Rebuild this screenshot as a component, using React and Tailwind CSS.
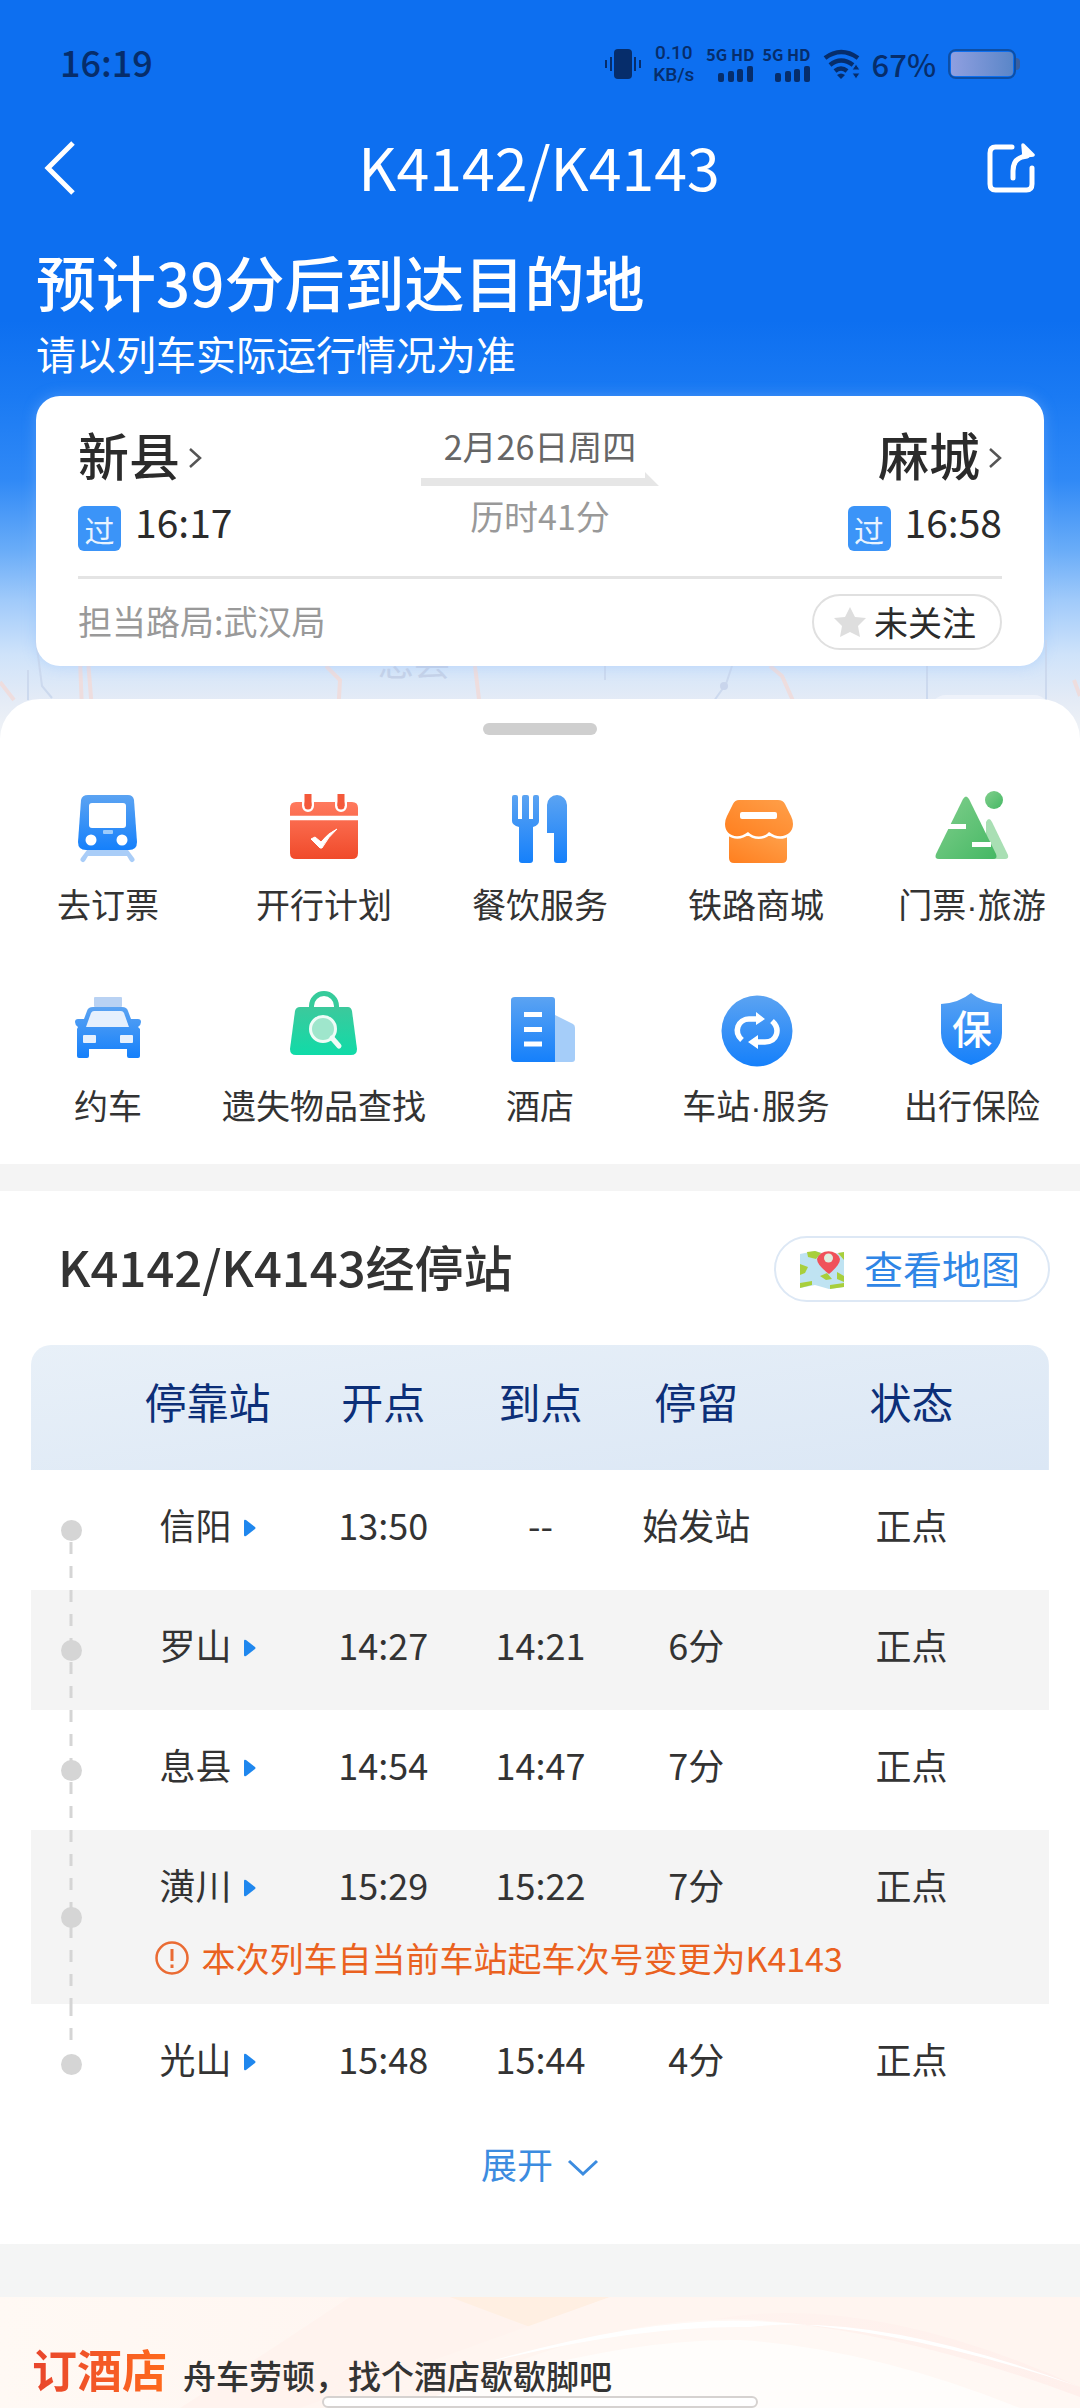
import React, { useState } from "react";

const shortcuts = [
  { label: "去订票", icon: TrainIcon },
  { label: "开行计划", icon: CalendarIcon },
  { label: "餐饮服务", icon: DiningIcon },
  { label: "铁路商城", icon: ShopIcon },
  { label: "门票·旅游", icon: MountainIcon },
  { label: "约车", icon: TaxiIcon },
  { label: "遗失物品查找", icon: BagIcon },
  { label: "酒店", icon: HotelIcon },
  { label: "车站·服务", icon: StationIcon },
  { label: "出行保险", icon: ShieldIcon },
];

const stops = [
  { name: "信阳", depart: "13:50", arrive: "--", stay: "始发站", status: "正点" },
  { name: "罗山", depart: "14:27", arrive: "14:21", stay: "6分", status: "正点" },
  { name: "息县", depart: "14:54", arrive: "14:47", stay: "7分", status: "正点" },
  {
    name: "潢川",
    depart: "15:29",
    arrive: "15:22",
    stay: "7分",
    status: "正点",
    notice: "本次列车自当前车站起车次号变更为K4143",
  },
  { name: "光山", depart: "15:48", arrive: "15:44", stay: "4分", status: "正点" },
];

/* shared gradients for the shortcut icons */
const Gradients = () => (
  <svg className="absolute h-0 w-0" aria-hidden="true">
    <defs>
      <linearGradient id="blue" x1="0" y1="0" x2="0" y2="1">
        <stop offset="0" stopColor="#5ba3f2" />
        <stop offset="1" stopColor="#1580fb" />
      </linearGradient>
      <linearGradient id="red" x1="0" y1="0" x2="0" y2="1">
        <stop offset="0" stopColor="#ff7a5e" />
        <stop offset="1" stopColor="#f04a2a" />
      </linearGradient>
      <linearGradient id="orange" x1="1" y1="0" x2="0" y2="1">
        <stop offset="0" stopColor="#ffa04a" />
        <stop offset="1" stopColor="#ff7f1f" />
      </linearGradient>
      <linearGradient id="green" x1="0" y1="0" x2="1" y2="1">
        <stop offset="0" stopColor="#82cf8d" />
        <stop offset="1" stopColor="#45b864" />
      </linearGradient>
      <linearGradient id="mint" x1="0" y1="0" x2="0" y2="1">
        <stop offset="0" stopColor="#3cc99c" />
        <stop offset="1" stopColor="#10dba8" />
      </linearGradient>
    </defs>
  </svg>
);

const Icon = ({ children }) => (
  <svg viewBox="0 0 72 72" className="h-18 w-18 overflow-visible" aria-hidden="true">
    {children}
  </svg>
);

function TrainIcon() {
  return (
    <Icon>
      <path d="M15 58h41l6 8a2 2 0 0 1-4 3l-3-5H16l-3 5a2 2 0 0 1-4-3z" fill="#a9cdf8" />
      <path d="M16 3h40q5 0 6 5l3 42q0 8-8 8H14q-8 0-8-8l3-42q1-5 7-5z" fill="url(#blue)" />
      <rect x="17" y="11" width="37" height="25" rx="3" fill="#fff" />
      <rect x="31" y="38" width="10" height="4" rx="1" fill="#9ccbfb" />
      <circle cx="19" cy="48" r="5.5" fill="#fff" />
      <circle cx="50" cy="48" r="5.5" fill="#fff" />
    </Icon>
  );
}

function CalendarIcon() {
  return (
    <Icon>
      <path d="M8 10h56q6 0 6 6v45q0 6-6 6H8q-6 0-6-6V16q0-6 6-6z" fill="url(#red)" />
      <path d="M2 26h68" stroke="#fff" strokeWidth="4.5" />
      <path d="M20 4v10M53 4v10" stroke="#fff" strokeWidth="12" strokeLinecap="round" />
      <path d="M20 2v12M53 2v12" stroke="#f4593a" strokeWidth="7" />
      <path d="M20 12v2M53 12v2" stroke="#f4593a" strokeWidth="7" strokeLinecap="round" />
      <path d="M23 47l4-2 6 5q7-9 16-13-9 8-15 19h-2z" fill="#fff" stroke="#fff" />
    </Icon>
  );
}

function DiningIcon() {
  return (
    <Icon>
      <path
        d="M8 5q0-2 2-2h2q2 0 2 2v22h4V5q0-2 2-2h3q2 0 2 2v22h4V5q0-2 2-2h2q2 0 2 2v24q0 4-6 6v33q0 3-3 3h-8q-3 0-3-3V35q-7-2-7-6z"
        fill="url(#blue)"
      />
      <path d="M43 13a10 10 0 0 1 20 0v55q0 3-3 3h-7q-3 0-3-3V41h-7z" fill="url(#blue)" />
    </Icon>
  );
}

function ShopIcon() {
  return (
    <Icon>
      <path d="M9 44h58v22q0 5-5 5H14q-5 0-5-5z" fill="url(#orange)" />
      <path
        d="M19 8H58Q63 8 65 12L71 24Q73 28 73 32C73 44 59 48 49 40C44 46 34 46 28 40C18 48 5 44 5 32Q5 28 7 24L13 12Q15 8 19 8Z"
        fill="url(#orange)"
        stroke="#fff"
        strokeWidth="5"
        paintOrder="stroke"
      />
      <rect x="20" y="20" width="37" height="7" rx="2" fill="#fff" />
    </Icon>
  );
}

function MountainIcon() {
  return (
    <Icon>
      <path d="M50 30q3-6 6 0l16 33q1 4-3 4H50z" fill="#a9dfb4" />
      <path d="M27 7q3-5 6 0l27 55q2 5-3 5H3q-5 0-3-5z" fill="url(#green)" />
      <path d="M12 34.500h18M36 52.500h19" stroke="#fff" strokeWidth="5" />
      <circle cx="58" cy="8" r="9" fill="url(#green)" />
    </Icon>
  );
}

function TaxiIcon() {
  return (
    <Icon>
      <rect x="22" y="4" width="28" height="10" rx="1" fill="#b9d2f3" />
      <path
        d="M21 14h29q5 0 6 4l3 8h7q3 0 3 3t-3 5l2 2v27q0 2-2 2H57q-2 0-2-2v-7H17v7q0 2-2 2H7q-2 0-2-2V36l1-2q-3-2-3-5t3-3h6l3-8q1-4 6-4z"
        fill="url(#blue)"
      />
      <path d="M22 18h27q2 0 3 2l5 14H14l5-14q1-2 3-2z" fill="#e6f0fd" />
      <rect x="11" y="42" width="13" height="8" rx="1" fill="#e6f0fd" />
      <rect x="48" y="42" width="13" height="8" rx="1" fill="#e6f0fd" />
    </Icon>
  );
}

function BagIcon() {
  return (
    <Icon>
      <path d="M23.500 16v-3a12.500 12.500 0 0 1 25 0v3" fill="none" stroke="#36cb9b" strokeWidth="5" />
      <path d="M12 14h48q3 0 4 4l5 38q0 6-6 6H8q-6 0-6-6l5-38q1-4 5-4z" fill="url(#mint)" />
      <circle cx="35" cy="36" r="12.500" fill="#9fe6cc" stroke="#effcf7" strokeWidth="3" />
      <path d="M44 45l7 8" stroke="#effcf7" strokeWidth="5" strokeLinecap="round" />
    </Icon>
  );
}

function HotelIcon() {
  return (
    <Icon>
      <path d="M51 22l18 9q2 1 2 4v31q0 3-3 3H51z" fill="#a5cdf9" />
      <path d="M11 4h37q3 0 3 3v62H11q-4 0-4-4V7q0-3 4-3z" fill="url(#blue)" />
      <path d="M20 21.500h18M20 36.500h18M20 51h18" stroke="#fff" strokeWidth="5" />
    </Icon>
  );
}

function StationIcon() {
  return (
    <Icon>
      <circle cx="37" cy="38" r="35.500" fill="url(#blue)" />
      <g fill="none" stroke="#fff" strokeWidth="5.500">
        <path d="M22 47C13 39 18 26 29 26h10" />
        <path d="M52 28c9 8 5 21-7 21H34" />
      </g>
      <path d="M36 19l9 7-9 6zM38 42l-10 7 10 7z" fill="#fff" />
    </Icon>
  );
}

function ShieldIcon() {
  return (
    <Icon>
      <path d="M35 0q12 10 31 11v29q0 21-31 32Q5 61 5 40V11Q23 10 35 0z" fill="url(#blue)" />
      <text x="36" y="51" textAnchor="middle" fontSize="40" fontWeight="500" fill="#fff">
        保
      </text>
    </Icon>
  );
}

const Signal = () => (
  <div className="flex flex-col items-end gap-1">
    <span className="text-base leading-4 font-bold">5G HD</span>
    <svg width="36" height="16" viewBox="0 0 36 16" aria-hidden="true">
      <rect x="0" y="7" width="6" height="9" rx="2" />
      <rect x="10" y="5" width="6" height="11" rx="2" />
      <rect x="19" y="3" width="6" height="13" rx="2" />
      <rect x="29" y="0" width="6" height="16" rx="2" />
    </svg>
  </div>
);

const StatusBar = () => (
  <div className="relative flex h-32 items-center justify-between px-[60px] fill-[#062d6b] text-[#062d6b]">
    <span className="pb-1.5 text-4xl font-medium">16:19</span>
    <div className="flex items-center">
      <svg width="36" height="30" viewBox="0 0 36 30" aria-hidden="true">
        <rect x="9" y="0" width="18" height="30" rx="4" />
        <path d="M1 11v8M6 8v14M30 8v14M35 11v8" stroke="#062d6b" strokeWidth="2" />
      </svg>
      <div className="ml-3 text-center font-[Roboto,sans-serif] text-[19px] leading-[22px] font-medium">
        <div>0.10</div>
        <div>KB/s</div>
      </div>
      <div className="ml-3 flex gap-2">
        <Signal />
        <Signal />
      </div>
      <svg className="ml-3" width="37" height="30" viewBox="0 0 37 30" aria-hidden="true">
        <g fill="none" stroke="#062d6b" strokeWidth="4.500">
          <path d="M2 9Q18-3 35 9" />
          <path d="M7 16q11-9 23 0" />
          <path d="M12 22q6-5 12 0" />
        </g>
        <path d="M14 26q4-3 8 0l-4 4z" />
        <path d="M33 15l4 6h-8zM33 30l4-6h-8z" stroke="#0d6ff0" strokeWidth="1" />
      </svg>
      <span className="ml-3 text-[31px] leading-8 font-medium">67%</span>
      <div className="ml-3 flex items-center">
        <div className="h-[30px] w-17 rounded-lg border-2 border-[#0d4fa6] p-px">
          <div className="h-full rounded-sm bg-linear-to-r from-[#8f9fe0] to-[#5a86c8]" />
        </div>
        <div className="h-3 w-1 rounded-r-sm bg-[#3a5f9f]" />
      </div>
    </div>
  </div>
);

/* faint map roads and a town name seen through the header fade */
const MapBackdrop = () => (
  <div aria-hidden="true">
    <svg
      className="absolute inset-x-0 bottom-0 h-30 w-full"
      viewBox="0 0 1080 120"
      preserveAspectRatio="none"
    >
      <g fill="none" stroke="#eeddde" strokeWidth="4">
        <path d="M0 62l14 18M80 40l2 50M88 40l4 50M326 46l14 14-2 36M475 46l6 50M770 46l12 10 16 36M1074 60l6 16" />
      </g>
      <g fill="none" stroke="#ccd9ee" strokeWidth="2">
        <path d="M36 20l6 46 10 12M28 50v30M605 46v14M732 46l-6 18-20 28M927 46v40M1046 20v66" />
      </g>
      <circle cx="724" cy="66" r="4" fill="#c9d5ec" />
      <rect x="930" y="75" width="120" height="60" rx="16" fill="#eef2fa" />
    </svg>
    <span className="absolute bottom-15 left-[35%] text-4xl leading-10 text-[#c6d2e8]">息县</span>
  </div>
);

const Station = ({ name, time, end }) => (
  <div className={end ? "flex flex-col items-end" : "flex flex-col items-start"}>
    <button className="flex items-center gap-2 text-[51px] leading-[60px] font-medium text-[#2b2b2b]">
      {name}
      <svg className="mt-2" width="14" height="22" viewBox="0 0 14 22" aria-hidden="true">
        <path d="M2 2l10 9-10 9" fill="none" stroke="#555" strokeWidth="2.500" />
      </svg>
    </button>
    <div className="mt-3.5 flex items-start gap-3.5">
      <span className="mt-2 flex h-[45px] w-[43px] items-center justify-center rounded-md bg-[#3b94f8] text-3xl leading-10 text-[#e8f3ff]">
        过
      </span>
      <span className="text-[39px] leading-[46px] text-[#2b2b2b]">{time}</span>
    </div>
  </div>
);

const TripCard = () => {
  const [followed, setFollowed] = useState(false);

  return (
    <section className="relative mx-9 mt-2 rounded-3xl bg-white px-[42px] pt-[28px] pb-4 shadow-[0_0_14px_rgba(140,190,255,0.4)]">
      <div className="flex justify-between border-b-3 border-[#e4e4e4] pb-[25px]">
        <Station name="新县" time="16:17" />
        <div className="flex flex-col items-center text-[34px] leading-10">
          <span className="pt-0.5 text-[#666]">2月26日周四</span>
          <svg className="mt-1.5" width="238" height="14" viewBox="0 0 238 14" aria-hidden="true">
            <path d="M0 6h224V0l14 14H0z" fill="#e6e6e6" />
          </svg>
          <span className="mt-2.5 text-[#999]">历时41分</span>
        </div>
        <Station name="麻城" time="16:58" end />
      </div>
      <div className="mt-[15px] flex items-center justify-between text-[34px]">
        <span className="pb-1 text-[#999]">担当路局:武汉局</span>
        <button
          onClick={() => setFollowed(!followed)}
          className="flex h-14 items-center gap-2 rounded-full border-2 border-[#e0e0e0] pr-6 pl-5 leading-10 text-[#2b2b2b]"
        >
          <svg width="32" height="30" viewBox="0 0 32 30" aria-hidden="true">
            <path
              d="M16 0l5 10 11 1-8 8 2 11-10-5-10 5 2-11-8-8 11-1z"
              fill={followed ? "#fbb03b" : "#dedede"}
            />
          </svg>
          {followed ? "已关注" : "未关注"}
        </button>
      </div>
    </section>
  );
};

const StopRows = ({ stop, index, last }) => {
  const cell = "pt-[30px] align-top";
  return (
    <tbody className={index % 2 ? "bg-[#f4f4f4]" : "bg-white"}>
      <tr className={stop.notice ? "h-[94px]" : "h-30"}>
        <td rowSpan={stop.notice ? 2 : 1} className="relative">
          <span
            className={
              "absolute left-1/2 w-[3px] -translate-x-1/2 bg-[repeating-linear-gradient(to_bottom,#d5d5d5_0_12px,transparent_12px_24px)] " +
              (index === 0 ? "top-[72px] bottom-0" : last ? "top-0 h-12" : "inset-y-0")
            }
          />
          <span className="relative mx-auto block h-[21px] w-[21px] rounded-full bg-[#d5d5d5]" />
        </td>
        <td className={cell}>
          <a href="#station" className="inline-flex items-center gap-3">
            {stop.name}
            <svg className="mt-2" width="12" height="18" viewBox="0 0 12 18" aria-hidden="true">
              <path d="M0 2q0-2 2-1l9 7q1 1 0 2l-9 7q-2 1-2-1z" fill="#1f87ee" />
            </svg>
          </a>
        </td>
        <td className={cell}>{stop.depart}</td>
        <td className={cell}>{stop.arrive}</td>
        <td className={cell}>{stop.stay}</td>
        <td className={cell}>{stop.status}</td>
      </tr>
      {stop.notice && (
        <tr className="h-20">
          <td colSpan={5} className="pt-2.5 pl-11 text-left align-top">
            <div className="flex items-center gap-3 text-[34px] leading-12 text-[#ea6120]">
              <svg width="34" height="34" viewBox="0 0 34 34" aria-hidden="true">
                <circle cx="17" cy="17" r="15.500" fill="none" stroke="#ea6b33" strokeWidth="2.500" />
                <path d="M17 8v12M17 23.500v3.500" stroke="#ea6b33" strokeWidth="3" />
              </svg>
              {stop.notice}
            </div>
          </td>
        </tr>
      )}
    </tbody>
  );
};

const StopsTable = () => (
  <div className="mx-[31px] mt-[43px] overflow-hidden rounded-t-[20px]">
    <table className="w-full table-fixed text-center text-4xl leading-12 text-[#333]">
      <thead>
        <tr className="h-[125px] bg-linear-to-br from-[#e8f0f8] to-[#dbe7f5] text-[42px] text-[#0c2f78]">
          <th className="w-[7.9%]" aria-label="进度"></th>
          <th className="w-[18.9%] pb-3.5 font-normal">停靠站</th>
          <th className="w-[15.6%] pb-3.5 font-normal">开点</th>
          <th className="w-[15.3%] pb-3.5 font-normal">到点</th>
          <th className="w-[15.3%] pb-3.5 font-normal">停留</th>
          <th className="pb-3.5 font-normal">状态</th>
        </tr>
      </thead>
      {stops.map((stop, i) => (
        <StopRows key={stop.name} stop={stop} index={i} last={i === stops.length - 1} />
      ))}
    </table>
  </div>
);

const App = () => {
  return (
    <div className="relative overflow-hidden bg-white font-['Noto_Sans_CJK_SC',sans-serif] text-[#333]">
      <Gradients />

      {/* Header */}
      <header className="relative bg-[linear-gradient(to_bottom,#0d6ff0_320px,#1a7af3_396px,#3089f6_480px,#69acf8_550px,#a0cafa_600px,#cfe3fa_655px,#e4ebf6_700px,#f2f4f6_740px)] pb-[74px]">
        <MapBackdrop />
        <StatusBar />
        <nav className="relative flex h-20 items-center justify-between pr-[45px] pl-[43px] text-white">
          <button aria-label="返回" className="w-12">
            <svg width="32" height="54" viewBox="0 0 32 54" fill="none" stroke="#fff" strokeWidth="5">
              <path d="M30 2L5 27l25 25" />
            </svg>
          </button>
          <h1 className="pb-1 text-[59px] leading-[76px]">K4142/K4143</h1>
          <button aria-label="分享" className="w-12">
            <svg width="48" height="50" viewBox="0 0 48 50" fill="none" stroke="#fff" strokeWidth="5">
              <path
                d="M25 4H8.500Q3 4 3 10v31q0 6 5.500 6h31q5.500 0 5.500-6V25"
                strokeLinecap="round"
              />
              <path d="M26 35v-7q0-11 9-14l5-1" strokeLinecap="round" />
              <path d="M36 2l10 10-9 1z" fill="#fff" strokeWidth="3.500" strokeLinejoin="round" />
            </svg>
          </button>
        </nav>
        <div className="relative px-9 pt-[36px] text-white">
          <p className="text-[60px] leading-[74px] font-medium">预计39分后到达目的地</p>
          <p className="text-[40px] leading-[70px]">请以列车实际运行情况为准</p>
        </div>
        <TripCard />
      </header>

      {/* Shortcuts */}
      <main className="relative -mt-[41px] rounded-t-[40px] bg-white pt-6">
        <div className="mx-auto h-3 w-[114px] rounded-full bg-[#cfcfcf]" />
        <div className="mt-[57px] grid grid-cols-5 gap-y-[61px] pb-[31px]">
          {shortcuts.map(({ label, icon: ShortcutIcon }) => (
            <a key={label} href="#service" className="flex flex-col items-center whitespace-nowrap">
              <ShortcutIcon />
              <span className="mt-4 font-['Liberation_Sans','Noto_Sans_CJK_SC',sans-serif] text-[34px] leading-[52px]">
                {label}
              </span>
            </a>
          ))}
        </div>

        <div className="h-[27px] bg-[#f4f4f4]" />

        {/* Stops */}
        <section className="pt-[45px]">
          <div className="flex items-center justify-between pr-[30px] pl-[58px]">
            <h2 className="pb-1.5 text-[49px] leading-[60px] font-medium">K4142/K4143经停站</h2>
            <button className="flex h-[66px] items-center gap-5 rounded-full border-2 border-[#dde8f5] pr-7 pl-6 text-[39px] leading-12 text-[#2f86e6]">
              <svg width="44" height="42" viewBox="0 0 44 42" aria-hidden="true">
                <path d="M0 6l15-3 14 4 15-3v35l-15 2-14-4-15 3z" fill="#bfe3f2" />
                <path d="M7 4l8-1 6 2-5 6-8-2zM0 16l8 3-3 6-5 2zM20 28l7-3 5 6-6 1zM0 35l12-2v4L0 40zM37 24l7 4v6l-7-3zM30 37l14-2v4l-14 2zM38 5l6-1v8z" fill="#a8cf3c" />
                <path d="M29 26q-12-9-12-15a12 11 0 0 1 23 0q0 6-11 15z" fill="#f0525a" />
                <circle cx="28.500" cy="10" r="4.500" fill="#dfeee0" />
              </svg>
              <span className="pb-1">查看地图</span>
            </button>
          </div>
          <StopsTable />
          <button className="mx-auto mt-[15px] flex items-center gap-3.5 text-4xl leading-12 text-[#3c8ce0]">
            展开
            <svg className="mt-2.5" width="32" height="18" viewBox="0 0 32 18" aria-hidden="true">
              <path d="M2 2l14 13L30 2" fill="none" stroke="#3c8ce0" strokeWidth="3" />
            </svg>
          </button>
        </section>

        <div className="mt-[57px] h-[53px] bg-[#f4f5f5]" />

        {/* Hotel banner */}
        <section className="relative flex h-[111px] items-center gap-4 overflow-hidden bg-linear-to-r from-[#fff9f4] to-[#fff0ec] px-8 pt-8">
          <svg
            className="absolute inset-0 h-full w-full"
            viewBox="0 0 1080 111"
            preserveAspectRatio="none"
            aria-hidden="true"
          >
            <path d="M350 0h260L440 65 330 111H180Q260 60 350 0z" fill="#fff3ee" />
            <path d="M450 0h160l-80 30z" fill="#ffefe2" />
            <path d="M610 0h470v90Q860-10 700 25 560 55 470 111H300z" fill="#fff5f0" />
            <path d="M480 80Q640 10 780 25q140 15 300 75v11H440z" fill="#fff8f4" />
            <path d="M470 70Q640 20 750 24q150 5 330 66Q880 15 750 30q-120-2-280 40z" fill="#fff" />
            <path d="M400 111q200-70 340-68 130 8 280 68z" fill="#fffdfb" />
          </svg>
          <h2 className="relative bg-linear-to-r from-[#e8452c] to-[#ff6a1c] bg-clip-text text-[45px] leading-[60px] font-bold text-transparent">
            订酒店
          </h2>
          <p className="relative pt-3 text-[33px] leading-12 font-medium">舟车劳顿，找个酒店歇歇脚吧</p>
        </section>
      </main>

      {/* Home indicator */}
      <div className="absolute bottom-0 left-1/2 h-3 w-[436px] -translate-x-1/2 rounded-full border-2 border-[#d6d2d0] bg-white" />
    </div>
  );
};

export default App;
